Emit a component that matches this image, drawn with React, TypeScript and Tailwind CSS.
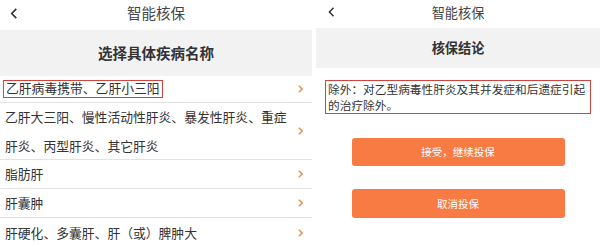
import React from 'react';

const font = { fontFamily: '"Noto Sans CJK SC", "Noto Sans", sans-serif' };

const Back = ({ className }: { className: string }) => (
  <svg viewBox="0 0 8 12" className={className} fill="none" stroke="#333" strokeWidth="1.8">
    <polyline points="6.5,1 1.5,6 6.5,11" />
  </svg>
);

const Chevron = () => (
  <svg viewBox="0 0 6 10" className="w-[5px] h-[8px] shrink-0" fill="none" stroke="#e6915a" strokeWidth="2">
    <polyline points="1,1 5,5 1,9" />
  </svg>
);

const items = [
  { lines: ['脂肪肝'] },
  { lines: ['肝囊肿'] },
  { lines: ['肝硬化、多囊肝、肝（或）脾肿大'] },
];

const App: React.FC = () => {
  return (
    <div className="w-[600px] h-[247px] bg-white flex gap-[4px] overflow-hidden text-[#333]" style={font}>
      {/* Left: disease list */}
      <div className="w-[312px] flex flex-col shrink-0">
        <div className="h-[31px] relative flex items-center justify-center">
          <Back className="absolute left-[10px] top-[8px] w-[8px] h-[11px]" />
          <span className="text-[14.5px] leading-none -mt-[4px] text-[#444]">智能核保</span>
        </div>
        <div className="h-[47px] bg-[#f2f2f2] flex items-center justify-center">
          <span className="text-[14.5px] font-bold">选择具体疾病名称</span>
        </div>
        <div className="h-[28px] border-b border-[#e2e2e2] flex items-center justify-between pl-[3px] pr-[9px]">
          <span className="border border-[#d0433f] px-[2px] h-[18px] flex items-center text-[12.8px] leading-none">
            乙肝病毒携带、乙肝小三阳
          </span>
          <Chevron />
        </div>
        <div className="h-[57px] border-b border-[#e2e2e2] flex items-center justify-between pl-[5px] pr-[9px]">
          <div className="text-[12.8px] leading-[29px] -mt-[1px]">
            <div>乙肝大三阳、慢性活动性肝炎、暴发性肝炎、重症</div>
            <div>肝炎、丙型肝炎、其它肝炎</div>
          </div>
          <Chevron />
        </div>
        {items.map((it, i) => (
          <div
            key={i}
            className={`h-[29px] shrink-0 flex items-center justify-between pl-[5px] pr-[9px] ${i < items.length - 1 ? 'border-b border-[#e2e2e2]' : ''}`}
          >
            <span className="text-[12.8px]">{it.lines[0]}</span>
            <Chevron />
          </div>
        ))}
      </div>

      {/* Right: conclusion */}
      <div className="flex-1 flex flex-col">
        <div className="h-[28px] relative flex items-center justify-center">
          <Back className="absolute left-[12px] top-[7px] w-[7px] h-[10px]" />
          <span className="text-[13.2px] leading-none -mt-[3px] text-[#444]">智能核保</span>
        </div>
        <div className="h-[40px] bg-[#f2f2f2] flex items-center justify-center">
          <span className="text-[13.2px] font-bold">核保结论</span>
        </div>
        <div className="px-[9px] pt-[12px]">
          <div className="border border-[#d0433f] px-[2px] py-0 text-[11.7px] leading-[16px]">
            除外：对乙型病毒性肝炎及其并发症和后遗症引起的治疗除外。
          </div>
        </div>
        <div className="flex flex-col items-center gap-[23px] pt-[24px]">
          <button className="w-[213px] h-[28px] rounded-[3px] bg-[#f87b44] text-white text-[10.5px]">
            接受，继续投保
          </button>
          <button className="w-[213px] h-[29px] rounded-[3px] bg-[#f87b44] text-white text-[10.5px]">
            取消投保
          </button>
        </div>
      </div>
    </div>
  );
};

export default App;
